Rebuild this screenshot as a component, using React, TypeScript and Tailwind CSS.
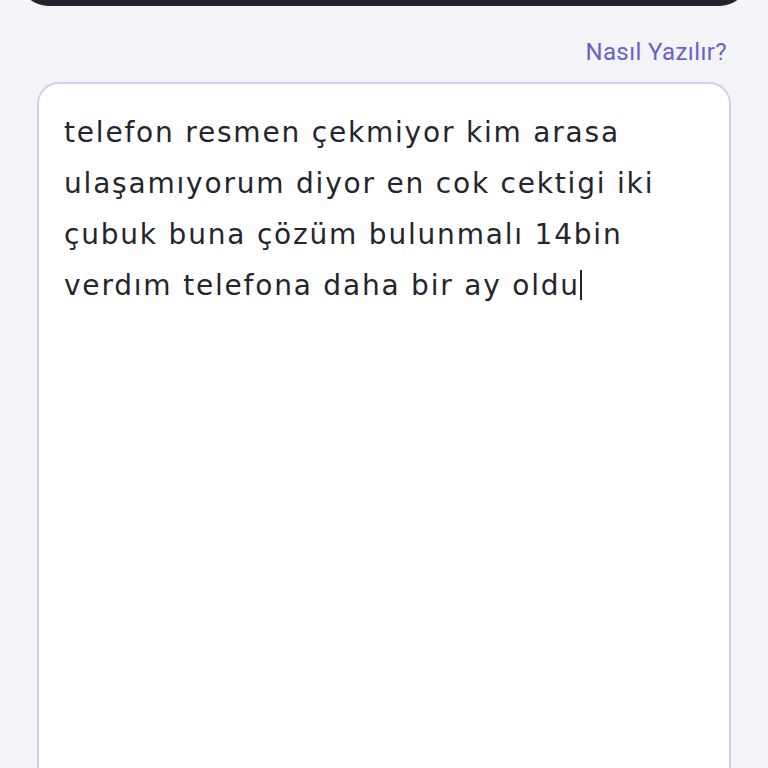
export default function App() {
  return (
    <div className="min-h-[768px] bg-[#f3f4f8] px-[37px]" style={{ fontFamily: "'DejaVu Sans', sans-serif" }}>
      <div className="-mx-[17px] -mt-[54px] h-[60px] rounded-[28px] bg-[#23222e]" />
      <div className="mt-[31px] flex justify-end pr-[4px]">
        <a
          className="text-[24px] leading-[30px] tracking-[0.4px] text-[#6c5fc7]"
          style={{ fontFamily: "Roboto, sans-serif" }}
        >
          Nasıl Yazılır?
        </a>
      </div>
      <div className="mt-[15px] h-[720px] rounded-[22px] border-2 border-[#cdd0f2] bg-white px-[25px] pt-[23px]">
        <p className="text-[28px] leading-[51px] tracking-[1.8px] text-[#25252d]">
          telefon resmen çekmiyor kim arasa ulaşamıyorum diyor en cok cektigi iki çubuk buna çözüm bulunmalı 14bin
          verdım telefona daha bir ay oldu
          <span className="inline-block h-[30px] w-[2px] translate-y-[5px] bg-[#25252d]" />
        </p>
      </div>
    </div>
  );
}
